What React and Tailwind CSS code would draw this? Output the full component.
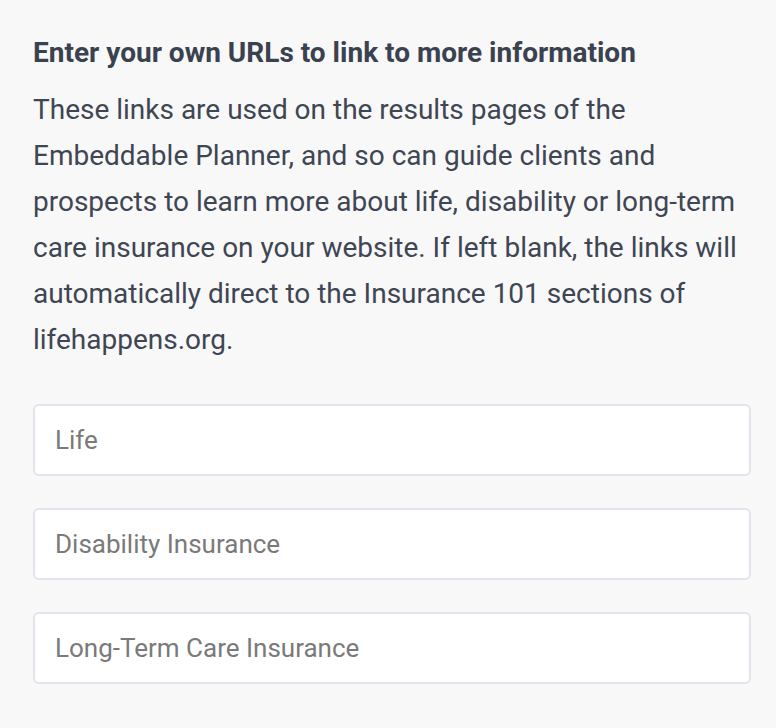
import React from "react";

const fields = ["Life", "Disability Insurance", "Long-Term Care Insurance"];

const App = () => {
  return (
    <section
      className="min-h-[728px] bg-[#f8f8f9] pl-[33px] pr-[25px] pt-[35px]"
      style={{ fontFamily: "Roboto, 'Noto Sans', sans-serif" }}
    >
      <h2 className="text-[28px] leading-[36px] font-bold text-[#3a4250]">
        Enter your own URLs to link to more information
      </h2>
      <p className="mt-[16px] text-[28px] leading-[46px] text-[#3f4653]">
        These links are used on the results pages of the Embeddable Planner,
        and so can guide clients and prospects to learn more about life,
        disability or long-term care insurance on your website. If left blank,
        the links will automatically direct to the Insurance 101 sections of
        lifehappens.org.
      </p>

      <form className="mt-[41px] flex flex-col gap-[32px]">
        {fields.map((name) => (
          <input
            key={name}
            type="url"
            placeholder={name}
            className="h-[72px] w-full rounded-[6px] border-2 border-[#e3e3ec] bg-white px-[20px] text-[26px] text-[#3f4653] outline-none placeholder:text-[#7a7a7a]"
          />
        ))}
      </form>
    </section>
  );
};

export default App;
